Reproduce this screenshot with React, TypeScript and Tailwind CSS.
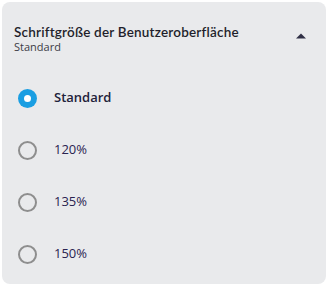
import { useState } from 'react';

const OPTIONS = ['Standard', '120%', '135%', '150%'];

function Radio({ checked }: { checked: boolean }) {
  return checked ? (
    <span className="flex h-[19px] w-[19px] items-center justify-center rounded-full bg-[#1a9ee2]">
      <span className="h-[7px] w-[7px] rounded-full bg-white" />
    </span>
  ) : (
    <span className="h-[19px] w-[19px] rounded-full border-2 border-[#8e8e8e]" />
  );
}

export default function App() {
  const [value, setValue] = useState('Standard');

  return (
    <div className="h-[288px] w-[328px] bg-white p-[2px] font-['Open_Sans',sans-serif]">
      <div className="h-[282px] w-[324px] rounded-[8px] bg-[#e9eaec]">
        <div className="flex items-center justify-between pl-[12px] pr-[20px] pt-[22px]">
          <div className="flex flex-col">
            <span className="font-['Lato',sans-serif] text-[13.5px] font-semibold leading-[16px] tracking-[0.2px] text-[#1f1f2b]">
              Schriftgröße der Benutzeroberfläche
            </span>
            <span className="text-[11px] leading-[14px] text-[#3c3c46]">Standard</span>
          </div>
          <svg width="10" height="6" viewBox="0 0 10 6" className="mb-[6px]">
            <path d="M0 5.5 L5 0.5 L10 5.5 Z" fill="#303046" />
          </svg>
        </div>
        <div className="mt-[18px] flex flex-col">
          {OPTIONS.map((o) => (
            <button
              key={o}
              onClick={() => setValue(o)}
              className="flex h-[52px] items-center gap-[17px] pl-[16px] text-left"
            >
              <Radio checked={value === o} />
              <span
                className={
                  value === o
                    ? 'text-[13px] font-semibold text-[#22223a]'
                    : 'text-[13px] text-[#2a2350]'
                }
              >
                {o}
              </span>
            </button>
          ))}
        </div>
      </div>
    </div>
  );
}
